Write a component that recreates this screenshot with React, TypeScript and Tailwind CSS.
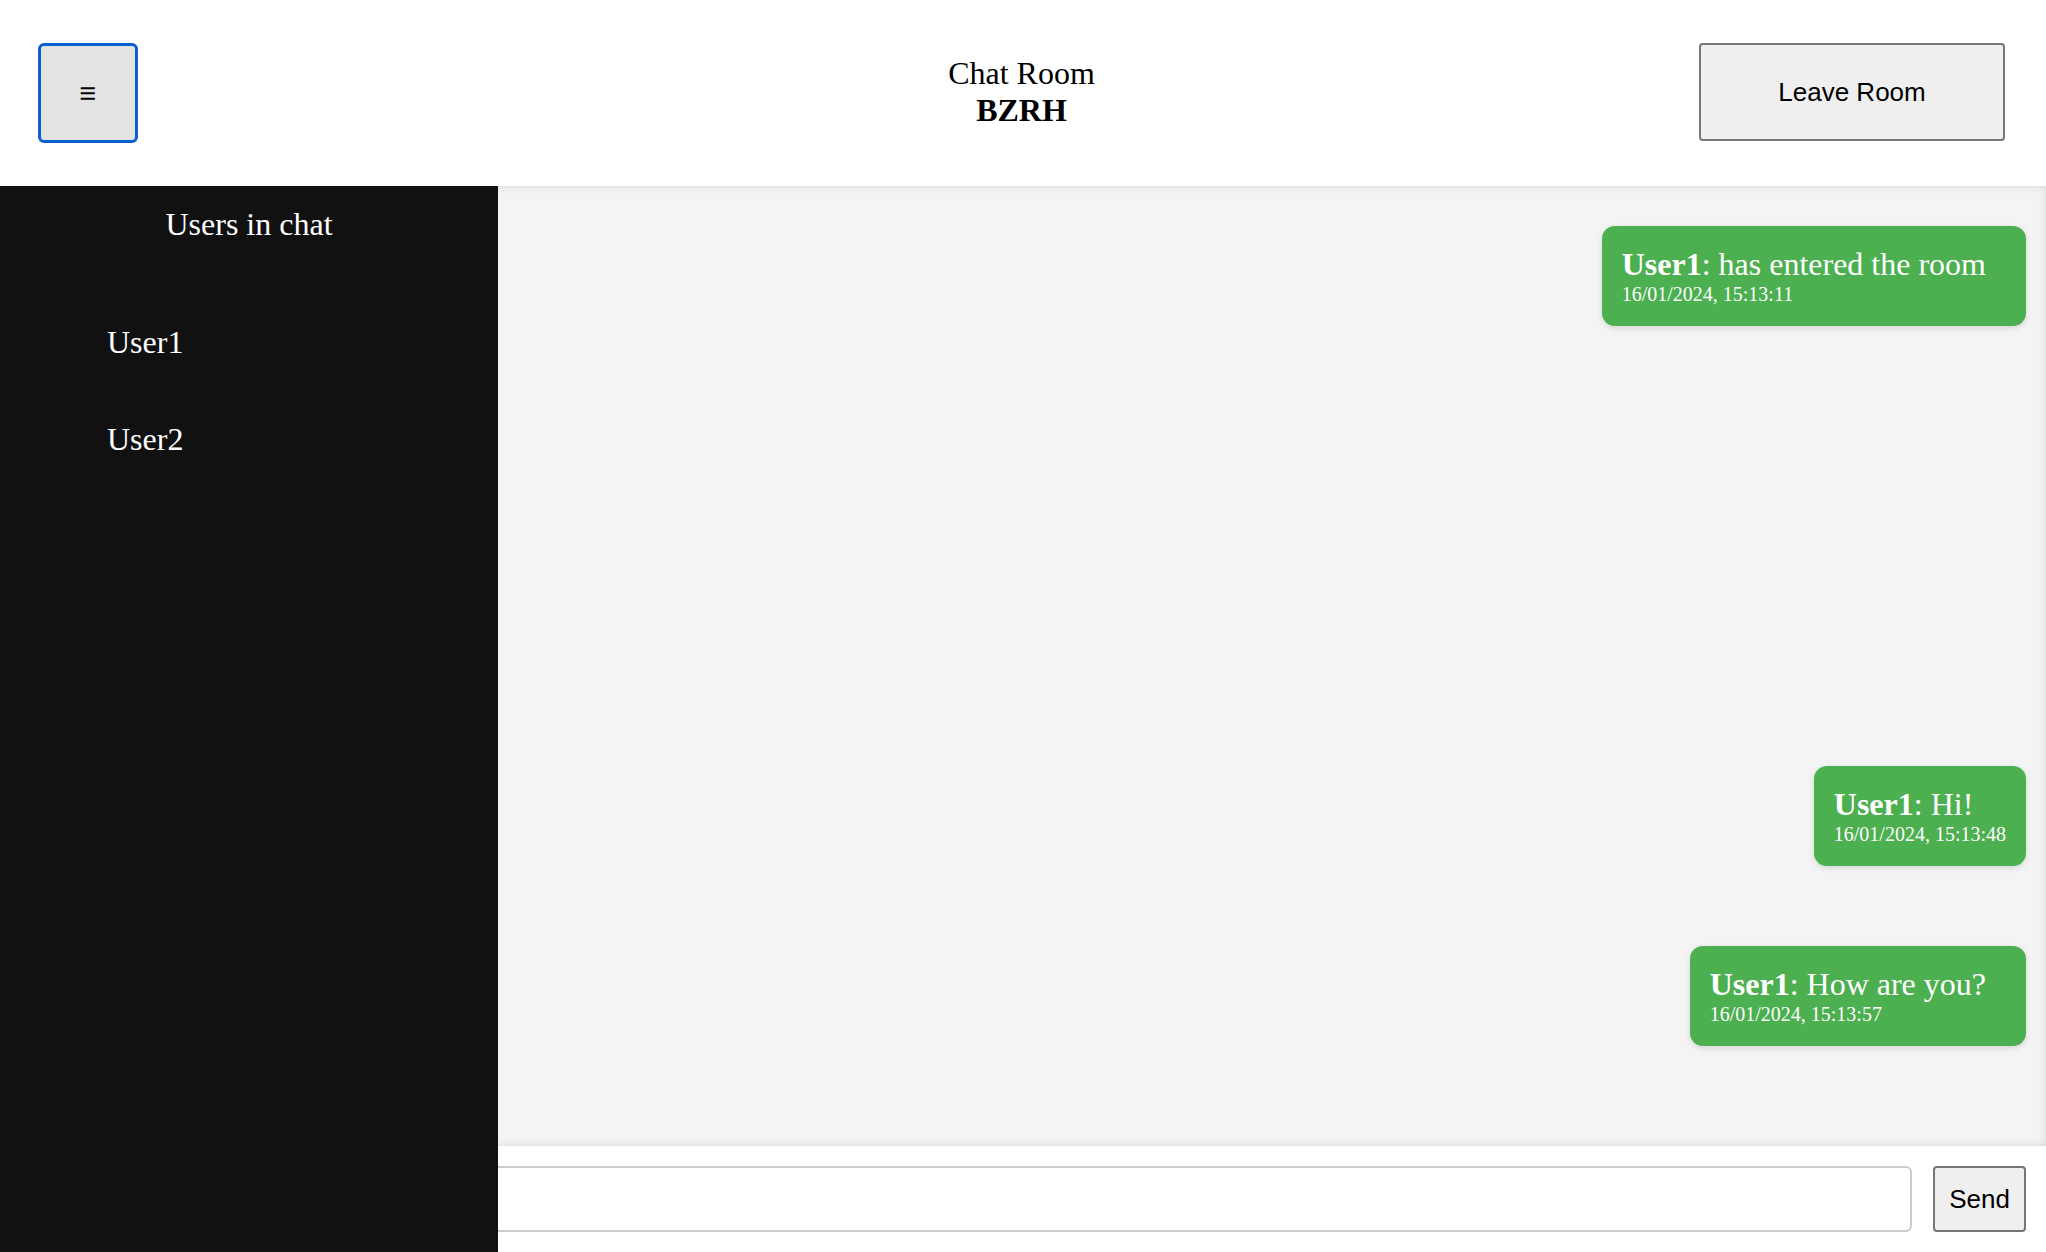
import React from "react";

interface Message {
    user: string;
    text: string;
    time: string;
}

const messages: Message[] = [
    { user: "User1", text: "has entered the room", time: "16/01/2024, 15:13:11" },
    { user: "User1", text: "Hi!", time: "16/01/2024, 15:13:48" },
    { user: "User1", text: "How are you?", time: "16/01/2024, 15:13:57" },
];

const users = ["User1", "User2"];

const Bubble: React.FC<{ msg: Message }> = ({ msg }) => (
    <div className="bg-[#4caf50] text-white rounded-[13px] p-5 shadow-[0_2px_6px_rgba(0,0,0,0.12)]">
        <div className="text-[32px] leading-[normal] pr-5 whitespace-nowrap">
            <strong>{msg.user}</strong>: {msg.text}
        </div>
        <div className="text-[20px] leading-[normal] whitespace-nowrap">{msg.time}</div>
    </div>
);

export default function App() {
    return (
        <div className="relative h-screen flex flex-col bg-white font-['Liberation_Serif',serif] text-black overflow-hidden">
            {/* header */}
            <header className="h-[186px] shrink-0 flex items-center pl-[38px] pr-[41px] bg-white">
                <div className="flex-1 flex">
                    <button className="w-[100px] h-[100px] rounded-[6px] border-[3px] border-[#0a60d0] bg-[#e3e3e3] flex items-center justify-center font-['Liberation_Sans',sans-serif] text-[29px] leading-none">
                        ≡
                    </button>
                </div>
                <div className="text-center text-[32px] leading-[normal] -mt-[2px]">
                    <div>Chat Room</div>
                    <div className="font-bold">BZRH</div>
                </div>
                <div className="flex-1 flex justify-end">
                    <button className="w-[306px] h-[98px] -mt-[2px] rounded-[4px] border-2 border-[#767676] bg-[#efefef] font-['Liberation_Sans',sans-serif] text-[26px]">
                        Leave Room
                    </button>
                </div>
            </header>

            {/* chat */}
            <main className="flex-1 flex flex-col min-h-0">
                <div className="flex-1 bg-[#f4f4f4] shadow-[inset_0_0_10px_rgba(0,0,0,0.12)] pt-10 pr-5 pb-[100px] flex flex-col items-end">
                    <Bubble msg={messages[0]} />
                    <div className="flex-1" />
                    <Bubble msg={messages[1]} />
                    <div className="h-20" />
                    <Bubble msg={messages[2]} />
                </div>
                <div className="shrink-0 bg-white p-5 flex gap-[21px]">
                    <input
                        type="text"
                        className="flex-1 h-[66px] rounded-[6px] border-2 border-[#cccccc] bg-white px-3 outline-none"
                    />
                    <button className="w-[93px] h-[66px] rounded-[4px] border-2 border-[#767676] bg-[#efefef] font-['Liberation_Sans',sans-serif] text-[26px]">
                        Send
                    </button>
                </div>
            </main>

            {/* users drawer */}
            <aside className="absolute left-0 top-[186px] bottom-0 w-[498px] bg-[#111111] text-white pt-5">
                <h2 className="text-center text-[32px] leading-[normal]">Users in chat</h2>
                <ul className="mt-[51px] pl-[107px]">
                    {users.map((u) => (
                        <li key={u} className="text-[32px] leading-[97px]">
                            {u}
                        </li>
                    ))}
                </ul>
            </aside>
        </div>
    );
}
